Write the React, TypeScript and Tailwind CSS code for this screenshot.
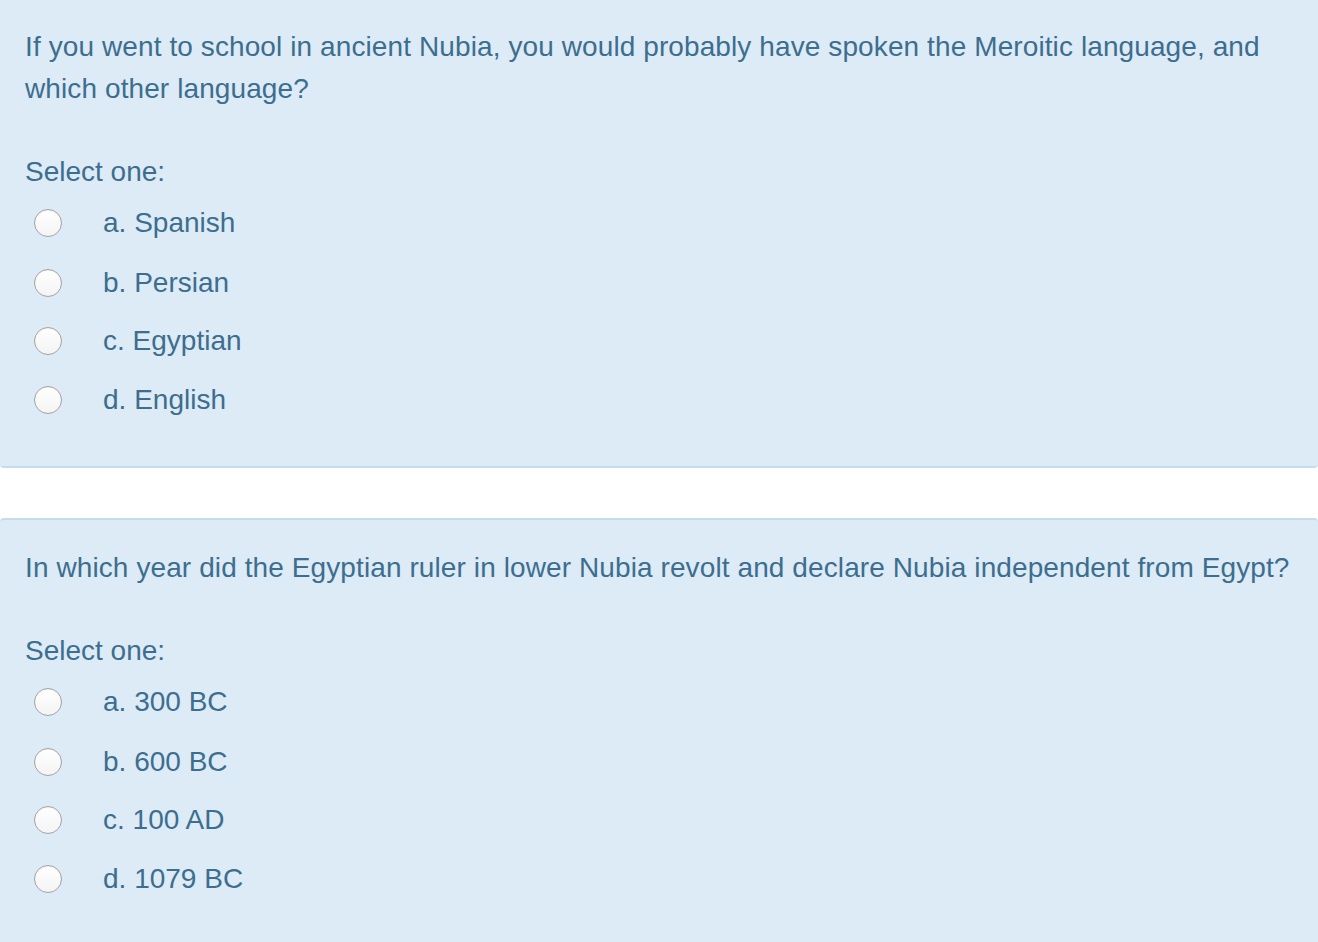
import React from "react";

interface Question {
  text: string;
  options: string[];
}

const questions: Question[] = [
  {
    text: "If you went to school in ancient Nubia, you would probably have spoken the Meroitic language, and which other language?",
    options: ["a. Spanish", "b. Persian", "c. Egyptian", "d. English"],
  },
  {
    text: "In which year did the Egyptian ruler in lower Nubia revolt and declare Nubia independent from Egypt?",
    options: ["a. 300 BC", "b. 600 BC", "c. 100 AD", "d. 1079 BC"],
  },
];

const QuestionCard: React.FC<{ q: Question; first: boolean }> = ({ q, first }) => (
  <div
    className={
      first
        ? "bg-[#dcebf6] border-b-2 border-[#c6dcec] rounded-b-[4px] pt-[26px] pb-[37px] pl-[25px] pr-[16px]"
        : "bg-[#dcebf6] border-t-2 border-[#c6dcec] rounded-t-[4px] pt-[27px] pb-[40px] pl-[25px] pr-[16px]"
    }
  >
    <div className="text-[28px] tracking-[0.1px] leading-[42px] text-[#3d6e8f]">{q.text}</div>
    <div className="mt-[41px] text-[28px] leading-[42px] text-[#3d6e8f]">Select one:</div>
    <ul>
      {q.options.map((o, i) => (
        <li key={o} className={i === 1 ? "flex items-center h-[59px] pt-[2px]" : "flex items-center h-[59px]"}>
          <span className="ml-[9px] w-[28px] h-[28px] rounded-full border border-[#a3a3a3] bg-gradient-to-b from-white to-[#f4f4f4] shadow-[inset_0_1px_1px_rgba(0,0,0,0.05)]" />
          <span className="ml-[41px] text-[28px] text-[#3d6e8f]">{o}</span>
        </li>
      ))}
    </ul>
  </div>
);

export default function App() {
  return (
    <div
      className="w-[1318px] h-[942px] overflow-hidden bg-white"
      style={{ fontFamily: '"Liberation Sans", Arial, sans-serif' }}
    >
      <QuestionCard q={questions[0]} first />
      <div className="h-[50px]" />
      <QuestionCard q={questions[1]} first={false} />
    </div>
  );
}
